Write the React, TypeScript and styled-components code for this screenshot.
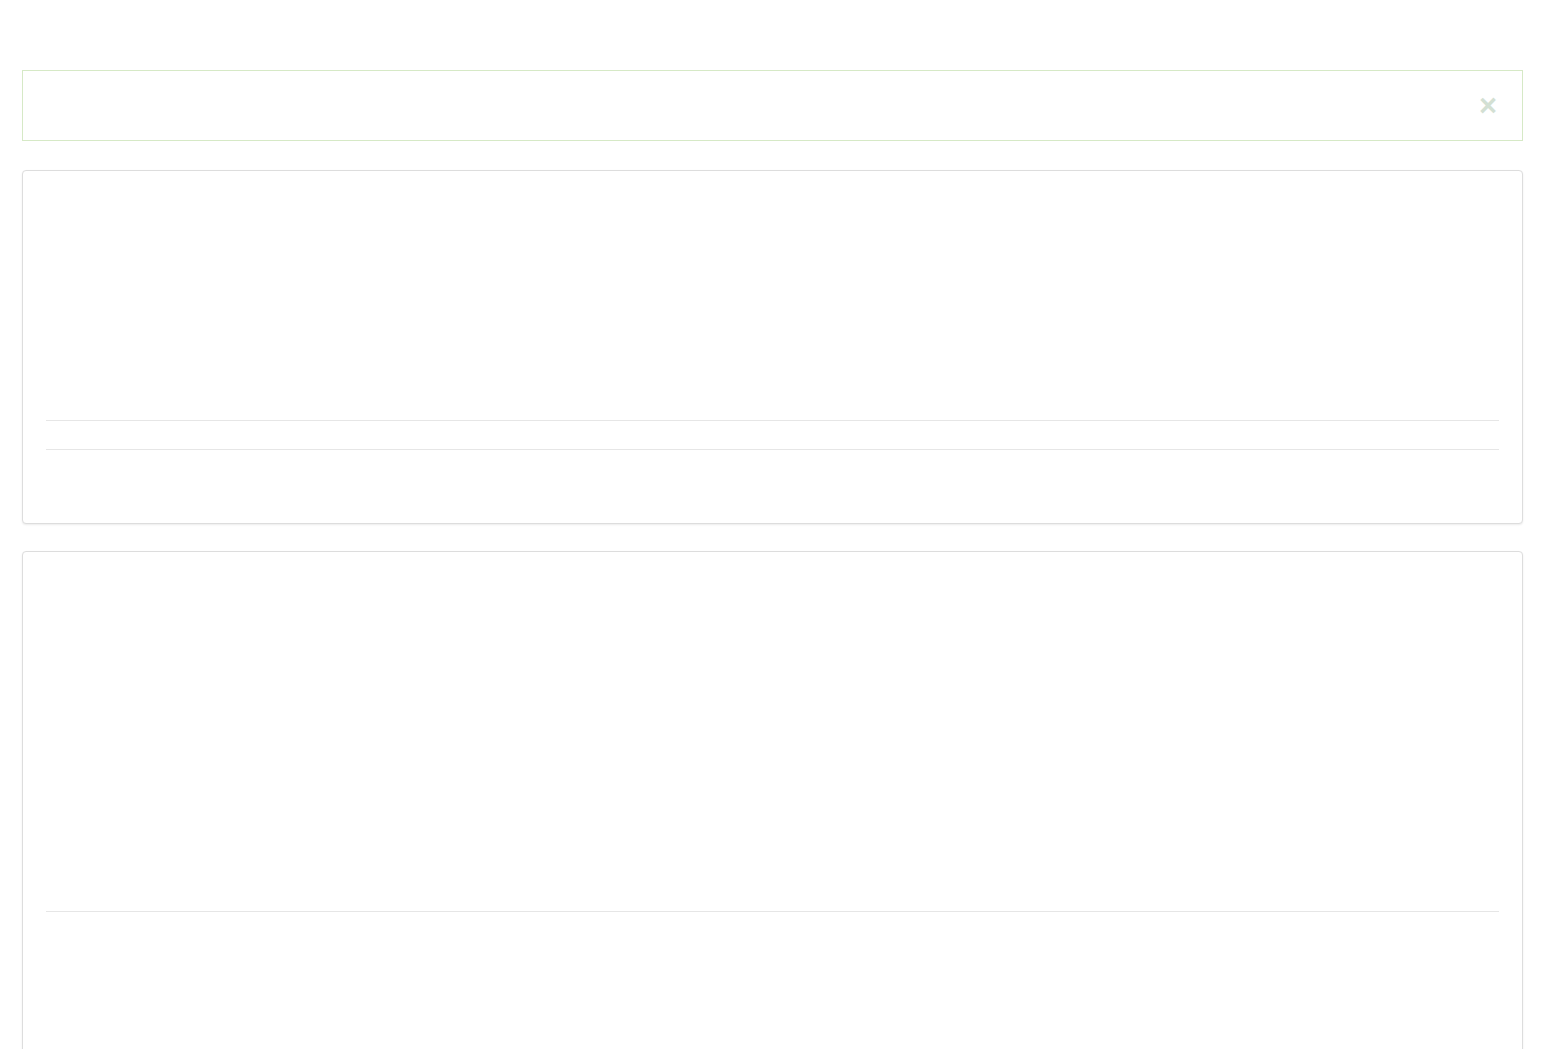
import React from "react";
import styled, { createGlobalStyle } from "styled-components";

const GlobalStyle = createGlobalStyle`
  html, body {
    margin: 0;
    padding: 0;
    background: #ffffff;
    font-family: "Liberation Sans", Arial, sans-serif;
    font-size: 14px;
    color: #333333;
  }
`;

const Page = styled.div`
  display: flex;
  flex-direction: column;
  padding: 70px 35px 0 22px;
  box-sizing: border-box;
  width: 1558px;
`;

const Alert = styled.div`
  display: flex;
  align-items: center;
  justify-content: flex-end;
  height: 71px;
  margin-bottom: 29px;
  box-sizing: border-box;
  border: 1px solid #d6e9c6;
  background: #ffffff;
  padding: 0 25px;
`;

const CloseButton = styled.button`
  border: 0;
  background: transparent;
  padding: 0;
  cursor: pointer;
  font-family: "Liberation Sans", Arial, sans-serif;
  font-size: 31px;
  font-weight: 700;
  line-height: 1;
  color: #3c763d;
  opacity: 0.22;
`;

const Panel = styled.div<{ $height: number }>`
  display: flex;
  flex-direction: column;
  height: ${(p) => p.$height}px;
  margin-bottom: 27px;
  box-sizing: border-box;
  border: 1px solid #dddddd;
  border-radius: 4px;
  box-shadow: 0 1px 2px rgba(0, 0, 0, 0.08);
  background: #ffffff;
  padding: 0 23px;
`;

const Block = styled.div<{ $height: number }>`
  height: ${(p) => p.$height}px;
  flex-shrink: 0;
`;

const Rule = styled.hr`
  margin: 0;
  border: 0;
  border-top: 1px solid #e6e6e6;
`;

const App = () => {
  return (
    <>
      <GlobalStyle />
      <Page>
        <Alert role="alert">
          <CloseButton type="button" aria-label="Close">
            ×
          </CloseButton>
        </Alert>
        <Panel $height={354}>
          <Block $height={249} />
          <Rule />
          <Block $height={28} />
          <Rule />
        </Panel>
        <Panel $height={560}>
          <Block $height={359} />
          <Rule />
        </Panel>
      </Page>
    </>
  );
};

export default App;
